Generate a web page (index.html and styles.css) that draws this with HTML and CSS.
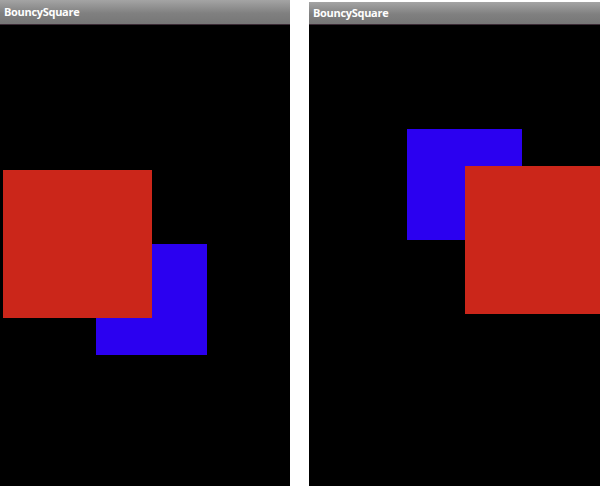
FILE: index.html
```html
<!DOCTYPE html>
<html>
<head>
<meta charset="utf-8">
<link rel="stylesheet" href="styles.css">
</head>
<body>
<div class="screens">
  <div class="phone phone-left">
    <div class="titlebar"><span class="title">BouncySquare</span></div>
    <div class="canvas">
      <div class="square blue" style="left:96px;top:219px;width:111px;height:111px"></div>
      <div class="square red" style="left:3px;top:145px;width:149px;height:148px"></div>
    </div>
  </div>
  <div class="phone phone-right">
    <div class="titlebar titlebar-short"><span class="title">BouncySquare</span></div>
    <div class="canvas">
      <div class="square blue" style="left:98px;top:104px;width:115px;height:111px"></div>
      <div class="square red" style="left:156px;top:141px;width:148px;height:148px"></div>
    </div>
  </div>
</div>
</body>
</html>
```
FILE: styles.css
```css
html, body {
  margin: 0;
  padding: 0;
  background: #ffffff;
}
.screens {
  display: flex;
  gap: 19px;
  width: 600px;
  height: 486px;
}
.phone {
  display: flex;
  flex-direction: column;
  background: #000000;
  height: 486px;
  overflow: hidden;
}
.phone-left {
  width: 290px;
}
.phone-right {
  width: 291px;
  border-top: 2px solid #ffffff;
  box-sizing: border-box;
}
.titlebar {
  height: 24px;
  flex: 0 0 24px;
  background: linear-gradient(#a4a4a4, #808080 55%, #767676);
  border-bottom: 1px solid #3a2a35;
  display: flex;
  align-items: center;
  padding-left: 4px;
}
.titlebar-short {
  height: 22px;
  flex: 0 0 22px;
}
.title {
  font-family: "Open Sans", "DejaVu Sans", sans-serif;
  font-weight: 700;
  font-size: 11px;
  letter-spacing: -0.3px;
  color: #ffffff;
  line-height: 1;
  margin-top: -1px;
}
.canvas {
  position: relative;
  flex: 1;
}
.square {
  position: absolute;
}
.red {
  background: #cb261a;
}
.blue {
  background: #2b00f0;
}
```
